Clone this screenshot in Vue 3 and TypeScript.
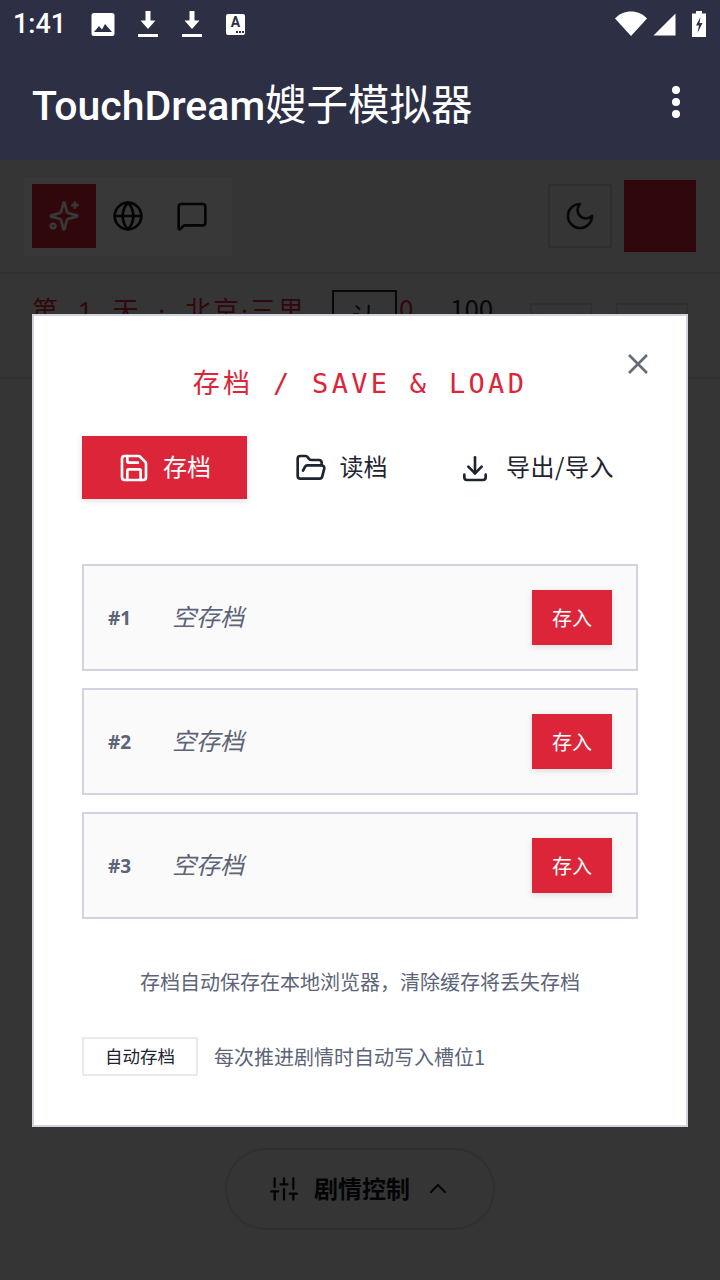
<template>
  <div class="phone">
    <header class="chrome">
      <div class="status-bar">
        <span class="clock">1:41</span>
        <svg class="st-icon first" width="24" height="24" viewBox="0 0 24 24"><rect x="0.5" y="1" width="23" height="23" rx="2.5" fill="#fff" /><path d="M3 20l5-6 3 3.4 3-5.4 7 8z" fill="#2d2f45" /></svg>
        <svg class="st-icon" width="20" height="26" viewBox="0 0 20 26"><path d="M7.500 0h5v9.500h5L10 18 2.500 9.500h5z" fill="#fff" /><rect y="23" width="20" height="3" fill="#fff" /></svg>
        <svg class="st-icon" width="20" height="26" viewBox="0 0 20 26"><path d="M7.500 0h5v9.500h5L10 18 2.500 9.500h5z" fill="#fff" /><rect y="23" width="20" height="3" fill="#fff" /></svg>
        <span class="font-badge">A<i /></span>
        <span class="st-right">
          <svg width="32" height="26" viewBox="0 0 32 26"><path d="M0 7.500C4 3 10 0.500 16 0.500S28 3 32 7.500L16 25z" fill="#fff" /></svg>
          <svg width="23" height="23" viewBox="0 0 23 23"><path d="M22.500 0.500V22.500H0.500z" fill="#fff" /></svg>
          <svg class="battery" width="14" height="26" viewBox="0 0 14 26"><path d="M4 0h6v2.500h4V26H0V2.500h4z" fill="#fff" /><path d="M8.500 6L4 14.500h3L5.500 22 10.500 12H7.500z" fill="#2d2f45" /></svg>
        </span>
      </div>
      <div class="app-bar">
        <h1>TouchDream<span>嫂子模拟器</span></h1>
        <span class="more"><i /><i /><i /></span>
      </div>
    </header>

    <main class="page">
      <section class="toolbar">
        <div class="mode-group">
          <button class="mode active">
            <svg width="32" height="32" viewBox="0 0 24 24" class="line"><path d="M9.937 15.500A2 2 0 0 0 8.500 14.063l-6.135-1.582a.5.5 0 0 1 0-.962L8.500 9.936A2 2 0 0 0 9.937 8.500l1.582-6.135a.5.5 0 0 1 .963 0L14.063 8.500A2 2 0 0 0 15.500 9.937l6.135 1.581a.5.5 0 0 1 0 .964L15.500 14.063a2 2 0 0 0-1.437 1.437l-1.582 6.135a.5.5 0 0 1-.963 0z" /><path d="M20.200 2v3.800M18.300 3.900h3.800" /><circle cx="3.800" cy="19.500" r="1.700" /></svg>
          </button>
          <button class="mode">
            <svg width="32" height="32" viewBox="0 0 24 24" class="line"><circle cx="12" cy="12" r="10" /><path d="M12 2a14.500 14.500 0 0 0 0 20 14.500 14.500 0 0 0 0-20" /><path d="M2 12h20" /></svg>
          </button>
          <button class="mode">
            <svg width="32" height="32" viewBox="0 0 24 24" class="line"><path d="M22 17a2 2 0 0 1-2 2H6.828a2 2 0 0 0-1.414.586l-2.202 2.202A.71.71 0 0 1 2 21.286V5a2 2 0 0 1 2-2h16a2 2 0 0 1 2 2z" /></svg>
          </button>
        </div>
        <div class="tool-right">
          <button class="moon">
            <svg width="32" height="32" viewBox="0 0 24 24" class="line"><path d="M12 3a6 6 0 0 0 9 9 9 9 0 1 1-9-9Z" /></svg>
          </button>
          <div class="red-square" />
        </div>
      </section>

      <section class="info-row">
        <span class="day">第 1 天 · 北京·三里</span>
        <span class="tag">认</span>
        <span class="zero">0</span>
        <span class="hundred">100</span>
        <span class="mini" />
        <span class="mini" />
      </section>

      <div class="pill">
        <svg width="28" height="28" viewBox="0 0 24 24" class="line"><path d="M4 21v-7M4 10V3M12 21v-9M12 8V3M20 21v-5M20 12V3M1 14h6M9 8h6M17 16h6" /></svg>
        <span>剧情控制</span>
        <svg width="24" height="24" viewBox="0 0 24 24" class="line"><path d="m5 15 7-7 7 7" /></svg>
      </div>
    </main>

    <div class="overlay">
      <div class="modal">
        <button class="close" aria-label="close">
          <svg width="28" height="28" viewBox="0 0 28 28"><path d="M5 5l18 18M23 5L5 23" stroke="#666b78" stroke-width="2.600" fill="none" /></svg>
        </button>
        <h2>存档 / SAVE &amp; LOAD</h2>

        <div class="tabs">
          <button v-for="tab in tabs" :key="tab.label" class="tab" :class="{ on: tab.on }" :style="{ width: tab.width + 'px' }">
            <svg width="32" height="32" viewBox="0 0 24 24" class="line">
              <path v-for="d in tab.paths" :key="d" :d="d" />
            </svg>
            <span>{{ tab.label }}</span>
          </button>
        </div>

        <ul class="slots">
          <li v-for="n in 3" :key="n" class="slot">
            <b>#{{ n }}</b>
            <em>空存档</em>
            <button class="put">存入</button>
          </li>
        </ul>

        <p class="note">存档自动保存在本地浏览器，清除缓存将丢失存档</p>

        <div class="auto">
          <span class="auto-tag">自动存档</span>
          <span class="auto-text">每次推进剧情时自动写入槽位1</span>
        </div>
      </div>
    </div>
  </div>
</template>

<script setup lang="ts">
interface Tab {
  label: string
  width: number
  on?: boolean
  paths: string[]
}

const tabs: Tab[] = [
  {
    label: '存档',
    width: 165,
    on: true,
    paths: [
      'M15.200 3a2 2 0 0 1 1.400.600l3.800 3.800a2 2 0 0 1 .600 1.400V19a2 2 0 0 1-2 2H5a2 2 0 0 1-2-2V5a2 2 0 0 1 2-2z',
      'M17 21v-7a1 1 0 0 0-1-1H8a1 1 0 0 0-1 1v7',
      'M7 3v4a1 1 0 0 0 1 1h7',
    ],
  },
  {
    label: '读档',
    width: 188,
    paths: [
      'm6 14 1.500-2.900A2 2 0 0 1 9.240 10H20a2 2 0 0 1 1.940 2.500l-1.540 6a2 2 0 0 1-1.950 1.500H4a2 2 0 0 1-2-2V5a2 2 0 0 1 2-2h3.900a2 2 0 0 1 1.690.900l.810 1.200a2 2 0 0 0 1.670.900H18a2 2 0 0 1 2 2v2',
    ],
  },
  {
    label: '导出/导入',
    width: 203,
    paths: ['M4 17v2a2 2 0 0 0 2 2h12a2 2 0 0 0 2-2v-2', 'M7 11l5 5 5-5', 'M12 4v12'],
  },
]
</script>

<style>
html,
body {
  margin: 0;
  background: #fff;
}
</style>

<style scoped>
* {
  box-sizing: border-box;
}

button {
  font: inherit;
  border: 0;
  padding: 0;
  background: none;
}

.line {
  fill: none;
  stroke: currentColor;
  stroke-width: 2;
  stroke-linecap: round;
  stroke-linejoin: round;
}

.phone {
  position: relative;
  width: 720px;
  height: 1280px;
  overflow: hidden;
  display: flex;
  flex-direction: column;
  font-family: "Noto Sans CJK SC", "Noto Sans", sans-serif;
  color: #1e2430;
}

.chrome {
  height: 160px;
  background: #2d2f45;
  color: #fff;
  flex-shrink: 0;
}

.status-bar {
  height: 48px;
  display: flex;
  align-items: center;
  padding: 0 14px 0 13px;
}

.clock {
  font: 500 27px Roboto, sans-serif;
  width: 78px;
}

.st-icon {
  margin-right: 24px;
  flex-shrink: 0;
}

.st-icon.first {
  margin-right: 23px;
}

.font-badge {
  width: 19px;
  height: 21px;
  border-radius: 2px;
  background: #fff;
  color: #2d2f45;
  font: 700 14px/17px Roboto, sans-serif;
  text-align: center;
  position: relative;
}

.font-badge i {
  position: absolute;
  right: 7px;
  bottom: 2px;
  width: 2px;
  height: 2px;
  background: #2d2f45;
  box-shadow: 3px 0 #2d2f45, 6px 0 #2d2f45;
}

.st-right {
  margin-left: auto;
  display: flex;
  align-items: center;
  gap: 6px;
}

.st-right .battery {
  margin-left: 10px;
}

.app-bar {
  height: 112px;
  display: flex;
  align-items: center;
  justify-content: space-between;
  padding: 0 40px 4px 32px;
}

.app-bar h1 {
  margin: 0;
  font: 500 41px Roboto, sans-serif;
}

.app-bar h1 span {
  font-family: "Noto Sans CJK SC", sans-serif;
  font-size: 41.500px;
  font-weight: 400;
}

.more {
  display: flex;
  flex-direction: column;
  gap: 4px;
}

.more i {
  width: 8px;
  height: 8px;
  border-radius: 50%;
  background: #fff;
}

.page {
  flex: 1;
  background: #f2f2f4;
  position: relative;
  display: flex;
  flex-direction: column;
}

.toolbar {
  height: 114px;
  padding: 17px 24px 0;
  border-bottom: 2px solid #dfdfe4;
  display: flex;
  justify-content: space-between;
}

.mode-group {
  width: 208px;
  height: 79px;
  padding: 7px 8px;
  background: #fff;
  display: flex;
}

.mode {
  width: 64px;
  height: 64px;
  display: flex;
  align-items: center;
  justify-content: center;
  color: #141414;
}

.mode.active {
  background: #dc2539;
  color: #fff;
}

.tool-right {
  display: flex;
  gap: 12px;
  margin-top: 3px;
}

.moon {
  width: 64px;
  height: 64px;
  margin-top: 4px;
  border: 2px solid #d0d4e0;
  display: flex;
  align-items: center;
  justify-content: center;
  color: #1e2430;
}

.red-square {
  width: 72px;
  height: 72px;
  background: #dc2539;
}

.info-row {
  height: 105px;
  padding: 16px 32px 0;
  border-bottom: 2px solid #dfdfe4;
  display: flex;
  align-items: flex-start;
  font-size: 26px;
  line-height: 36px;
}

.day {
  width: 300px;
  margin-top: 2px;
  font-family: "Noto Sans", "Noto Sans CJK SC", sans-serif;
  color: #dc2539;
  letter-spacing: 2px;
  word-spacing: 9px;
  white-space: nowrap;
}

.tag {
  width: 65px;
  height: 40px;
  border: 2px solid #1e2430;
  padding-top: 6px;
  text-align: center;
  margin-right: 2px;
}

.zero {
  color: #dc2539;
  width: 51px;
}

.hundred {
  width: 80px;
  color: #1e2430;
}

.mini {
  width: 62px;
  height: 60px;
  margin-top: 13px;
  margin-right: 24px;
  border: 2px solid #d0d4e0;
}

.mini:last-child {
  width: 72px;
  margin-right: 0;
}

.pill {
  margin: auto auto 50px;
  width: 270px;
  height: 82px;
  border: 2px solid #d8d8dc;
  border-radius: 41px;
  display: flex;
  align-items: center;
  justify-content: center;
  gap: 16px;
  font-size: 24px;
  font-weight: 700;
  color: #14161c;
}

.pill span {
  margin-bottom: 4px;
}

/* modal sits over the dimmed page */
.overlay {
  position: absolute;
  inset: 160px 0 0;
  background: rgba(0, 0, 0, 0.78);
  padding-top: 154px;
  display: flex;
  justify-content: center;
  align-items: flex-start;
}

.modal {
  position: relative;
  width: 656px;
  height: 813px;
  background: #fff;
  border: 2px solid #d0d4e0;
  padding: 48px 48px 0;
}

.close {
  position: absolute;
  top: 34px;
  right: 34px;
  width: 28px;
  height: 28px;
}

.modal h2 {
  margin: 0;
  height: 39px;
  font: 400 27px/39px "DejaVu Sans Mono", "Noto Sans CJK SC", monospace;
  letter-spacing: 3.300px;
  text-align: center;
  color: #dc2539;
}

.tabs {
  display: flex;
  margin-top: 33px;
}

.tab {
  height: 63px;
  display: flex;
  align-items: center;
  justify-content: center;
  gap: 13px;
  font-size: 24px;
  color: #1e2430;
}

.tab span {
  margin-bottom: 4px;
}

.tab:last-child {
  gap: 15px;
  letter-spacing: 0.500px;
}

.tab.on {
  background: #dc2539;
  color: #fff;
  box-shadow: 0 2px 6px rgba(0, 0, 0, 0.12);
}

.slots {
  list-style: none;
  margin: 65px 0 0;
  padding: 0;
  display: flex;
  flex-direction: column;
  gap: 17px;
}

.slot {
  height: 107px;
  background: #fafafa;
  border: 2px solid #d0d4e0;
  display: flex;
  align-items: center;
  padding: 0 24px;
}

.slot b {
  width: 64px;
  font-family: "Noto Sans", sans-serif;
  font-size: 19px;
  color: #5c6478;
}

.slot em {
  flex: 1;
  margin-bottom: 4px;
  font-size: 24px;
  color: #5c6478;
}

.put {
  width: 80px;
  height: 55px;
  background: #dc2539;
  color: #fff;
  font-size: 20px;
  box-shadow: 0 2px 6px rgba(0, 0, 0, 0.12);
}

.note {
  margin: 49px 0 0;
  font-size: 20px;
  line-height: 28px;
  text-align: center;
  color: #5c6478;
}

.auto {
  display: flex;
  align-items: center;
  gap: 16px;
  margin-top: 41px;
}

.auto-tag {
  width: 116px;
  height: 39px;
  border: 2px solid #e8eaf0;
  font-size: 17.500px;
  line-height: 33px;
  text-align: center;
}

.auto-text {
  font-size: 20px;
  color: #5c6478;
}
</style>
